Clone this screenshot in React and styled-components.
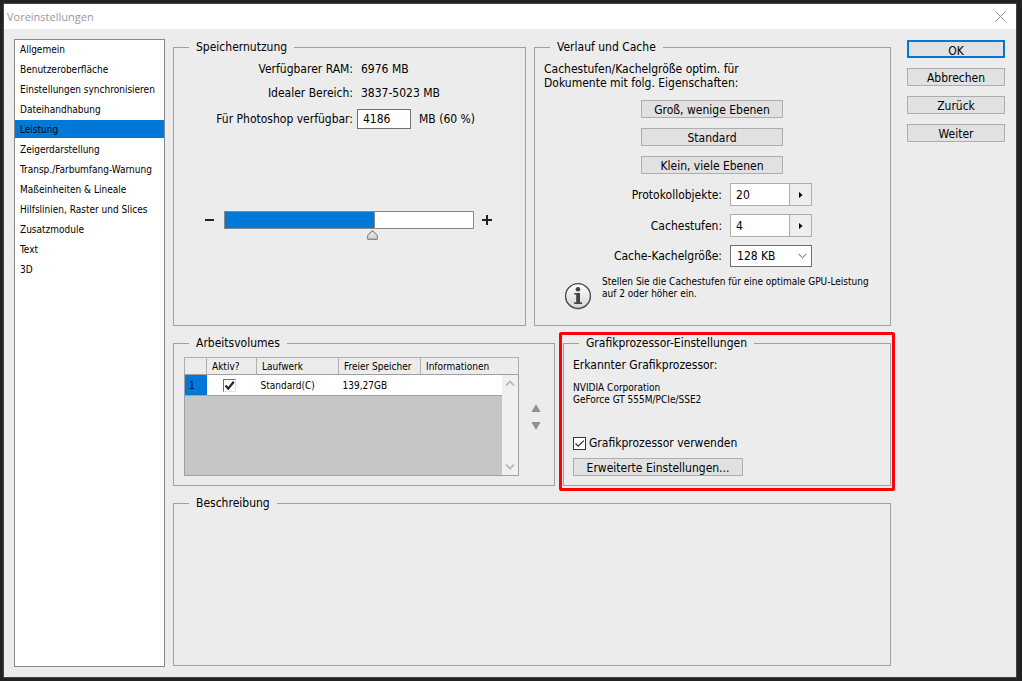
import React from 'react';
import styled, { createGlobalStyle } from 'styled-components';

const categories = [
    'Allgemein',
    'Benutzeroberfläche',
    'Einstellungen synchronisieren',
    'Dateihandhabung',
    'Leistung',
    'Zeigerdarstellung',
    'Transp./Farbumfang-Warnung',
    'Maßeinheiten & Lineale',
    'Hilfslinien, Raster und Slices',
    'Zusatzmodule',
    'Text',
    '3D'
];

const thumb = encodeURIComponent(
    '<svg xmlns="http://www.w3.org/2000/svg" width="11" height="10" viewBox="0 0 11 10"><defs><linearGradient id="g" x2="0" y2="1"><stop stop-color="#fafafa"/><stop offset="1" stop-color="#c8c8c8"/></linearGradient></defs><path d="M5.5 .8 L10.4 5.4 V8.4 Q10.4 9.4 9.4 9.4 H1.6 Q.6 9.4 .6 8.4 V5.4 Z" fill="url(#g)" stroke="#888" stroke-width="1.1"/></svg>'
);

class App extends React.Component {
    constructor(props) {
        super(props);
        this.state = {
            category: 'Leistung',
            ram: '4186',
            percent: 60,
            history: '20',
            levels: '4',
            tile: '128 KB',
            scratch: true,
            gpu: true
        }
        this.handleChange = this.handleChange.bind(this);
    }
    handleChange(e) {
        const { name, type, value, checked } = e.target;
        this.setState({ [name]: type === 'checkbox' ? checked : value });
    }
    handlePercent(percent) {
        const total = 6976;
        this.setState({ percent: percent, ram: String(Math.round(total * percent / 100)) });
    }
    render() {
        const { category, ram, percent, history, levels, tile, scratch, gpu } = this.state;
        return (
            <Desktop>
                <GlobalStyle />
                <Dialog>
                    <TitleBar>
                        <Title>Voreinstellungen</Title>
                        <CloseButton type="button" aria-label="Schließen">
                            <svg width="11" height="11" viewBox="0 0 11 11">
                                <path d="M.5 .5 L10.5 10.5 M10.5 .5 L.5 10.5" stroke="#8f8f8f" fill="none" />
                            </svg>
                        </CloseButton>
                    </TitleBar>
                    <Body>
                        <Categories>
                            {categories.map((name) => (
                                <li key={name}>
                                    <Category
                                        type="button"
                                        $active={name === category}
                                        onClick={() => this.setState({ category: name })}
                                    >
                                        {name}
                                    </Category>
                                </li>
                            ))}
                        </Categories>
                        <Main>
                            <Row>
                                <Group $grow={353}>
                                    <Legend>Speichernutzung</Legend>
                                    <Memory>
                                        <span>Verfügbarer RAM:</span>
                                        <Value>6976 MB</Value>
                                        <span>Idealer Bereich:</span>
                                        <Value>3837-5023 MB</Value>
                                        <label htmlFor="ram">Für Photoshop verfügbar:</label>
                                        <RamField>
                                            <RamInput id="ram" name="ram" value={ram} onChange={this.handleChange} />
                                            <span>MB ({percent} %)</span>
                                        </RamField>
                                    </Memory>
                                    <SliderRow>
                                        <StepButton type="button" aria-label="Weniger" onClick={() => this.handlePercent(percent - 1)}>
                                            <svg width="12" height="12" viewBox="0 0 12 12"><path d="M1 5h9v2H1z" fill="#222" /></svg>
                                        </StepButton>
                                        <Slider
                                            type="range"
                                            min="0"
                                            max="100"
                                            aria-label="Speichernutzung"
                                            value={percent}
                                            style={{ '--filled': percent + '%' }}
                                            onChange={(e) => this.handlePercent(Number(e.target.value))}
                                        />
                                        <StepButton type="button" aria-label="Mehr" onClick={() => this.handlePercent(percent + 1)}>
                                            <svg width="11" height="12" viewBox="0 0 11 12"><path d="M0 5h10v2H0z M4 1h2v10H4z" fill="#222" /></svg>
                                        </StepButton>
                                    </SliderRow>
                                </Group>
                                <Group $grow={357}>
                                    <Legend>Verlauf und Cache</Legend>
                                    <Intro>
                                        Cachestufen/Kachelgröße optim. für<br />
                                        Dokumente mit folg. Eigenschaften:
                                    </Intro>
                                    <Presets>
                                        <Button type="button">Groß, wenige Ebenen</Button>
                                        <Button type="button">Standard</Button>
                                        <Button type="button">Klein, viele Ebenen</Button>
                                    </Presets>
                                    <CacheFields>
                                        <label htmlFor="history">Protokollobjekte:</label>
                                        <Spinner>
                                            <SpinnerInput id="history" name="history" value={history} onChange={this.handleChange} />
                                            <SpinnerButton type="button" aria-label="Protokollobjekte einstellen"><Arrow /></SpinnerButton>
                                        </Spinner>
                                        <label htmlFor="levels">Cachestufen:</label>
                                        <Spinner>
                                            <SpinnerInput id="levels" name="levels" value={levels} onChange={this.handleChange} />
                                            <SpinnerButton type="button" aria-label="Cachestufen einstellen"><Arrow /></SpinnerButton>
                                        </Spinner>
                                        <label htmlFor="tile">Cache-Kachelgröße:</label>
                                        <Select id="tile" name="tile" value={tile} onChange={this.handleChange}>
                                            <option>128 KB</option>
                                            <option>1024 KB</option>
                                        </Select>
                                    </CacheFields>
                                    <Hint>
                                        <InfoIcon />
                                        <Small>
                                            Stellen Sie die Cachestufen für eine optimale GPU-Leistung<br />
                                            auf 2 oder höher ein.
                                        </Small>
                                    </Hint>
                                </Group>
                            </Row>
                            <Row>
                                <Group $grow={380}>
                                    <Legend>Arbeitsvolumes</Legend>
                                    <Volumes>
                                        <Table>
                                            <colgroup>
                                                <col width="22" />
                                                <col width="50" />
                                                <col width="82" />
                                                <col width="82" />
                                                <col />
                                                <col width="16" />
                                            </colgroup>
                                            <thead>
                                                <tr>
                                                    <th aria-label="Nummer"></th>
                                                    <th>Aktiv?</th>
                                                    <th>Laufwerk</th>
                                                    <th>Freier Speicher</th>
                                                    <th colSpan="2">Informationen</th>
                                                </tr>
                                            </thead>
                                            <tbody>
                                                <tr>
                                                    <NumberCell>1</NumberCell>
                                                    <CheckCell>
                                                        <ScratchCheck
                                                            type="checkbox"
                                                            name="scratch"
                                                            aria-label="Standard(C) aktiv"
                                                            checked={scratch}
                                                            onChange={this.handleChange}
                                                        />
                                                    </CheckCell>
                                                    <td>Standard(C)</td>
                                                    <td>139,27GB</td>
                                                    <td></td>
                                                    <ScrollCell rowSpan="2">
                                                        <ScrollBar>
                                                            <Chevron d="M1 5.5 L5 1.5 L9 5.5" />
                                                            <Chevron d="M1 1.5 L5 5.5 L9 1.5" />
                                                        </ScrollBar>
                                                    </ScrollCell>
                                                </tr>
                                                <tr>
                                                    <EmptyCell colSpan="5"></EmptyCell>
                                                </tr>
                                            </tbody>
                                        </Table>
                                        <Order>
                                            <OrderButton type="button" aria-label="Nach oben">
                                                <svg width="10" height="8" viewBox="0 0 10 8"><path d="M5 0 L9.6 8 H.4z" fill="#919191" /></svg>
                                            </OrderButton>
                                            <OrderButton type="button" aria-label="Nach unten">
                                                <svg width="10" height="8" viewBox="0 0 10 8"><path d="M5 8 L9.6 0 H.4z" fill="#919191" /></svg>
                                            </OrderButton>
                                        </Order>
                                    </Volumes>
                                </Group>
                                <Highlight $grow={328}>
                                    <Group $grow={1}>
                                        <Legend>Grafikprozessor-Einstellungen</Legend>
                                        <Gpu>
                                            <span>Erkannter Grafikprozessor:</span>
                                            <GpuName>
                                                NVIDIA Corporation<br />
                                                GeForce GT 555M/PCIe/SSE2
                                            </GpuName>
                                            <CheckLabel>
                                                <Check type="checkbox" name="gpu" checked={gpu} onChange={this.handleChange} />
                                                Grafikprozessor verwenden
                                            </CheckLabel>
                                            <GpuButton type="button">Erweiterte Einstellungen...</GpuButton>
                                        </Gpu>
                                    </Group>
                                </Highlight>
                            </Row>
                            <Row $fill>
                                <Group $grow={1}>
                                    <Legend>Beschreibung</Legend>
                                </Group>
                            </Row>
                        </Main>
                        <Actions>
                            <Button type="button" $primary>OK</Button>
                            <Button type="button">Abbrechen</Button>
                            <Button type="button">Zurück</Button>
                            <Button type="button">Weiter</Button>
                        </Actions>
                    </Body>
                </Dialog>
            </Desktop>
        );
    }
}

export default App;

const Arrow = () => (
    <svg width="4" height="6" viewBox="0 0 4 6"><path d="M0 0 L3.6 3 L0 6z" fill="#000" /></svg>
);

const Chevron = ({ d }) => (
    <svg width="10" height="7" viewBox="0 0 10 7"><path d={d} fill="none" stroke="#b4b4b4" strokeWidth="1.6" /></svg>
);

const InfoIcon = () => (
    <svg width="28" height="28" viewBox="0 0 28 28">
        <defs>
            <linearGradient id="info" x2="0" y2="1">
                <stop stopColor="#ffffff" />
                <stop offset="1" stopColor="#d4d4d4" />
            </linearGradient>
        </defs>
        <circle cx="14" cy="14.8" r="12.6" fill="none" stroke="#bbb" />
        <circle cx="14" cy="14" r="12.4" fill="url(#info)" stroke="#444" strokeWidth="1.3" />
        <circle cx="14" cy="7.2" r="2.3" fill="#444" />
        <path d="M10.2 11 H16 V20.2 H18 V22 H10.2 V20.2 H12.2 V12.6 H10.2z" fill="#444" />
    </svg>
);

const GlobalStyle = createGlobalStyle`
    * {
        box-sizing: border-box;
    }

    body {
        margin: 0;
        background: #222;
        color: #000;
        font: 12px/18px "DejaVu Sans Condensed", "Noto Sans", sans-serif;
    }

    button, input, select {
        font: inherit;
        color: inherit;
    }
`;

const Desktop = styled.div`
    display: flex;
    min-height: 100vh;
    padding: 3px 5px 3px 3px;
`;

const Dialog = styled.div`
    flex: 1;
    display: flex;
    flex-direction: column;
    border: 1px solid #444;
    background: #ececec;
`;

const TitleBar = styled.header`
    display: flex;
    align-items: center;
    justify-content: space-between;
    height: 25px;
    padding: 0 10px 0 3px;
    background: #fff;
`;

const Title = styled.h1`
    margin: 0;
    font: 11px/24px "Open Sans", sans-serif;
    color: #999;
`;

const CloseButton = styled.button`
    display: flex;
    padding: 0;
    border: none;
    background: none;
`;

const Body = styled.div`
    flex: 1;
    display: flex;
    padding: 9px 11px 10px 10px;
`;

const Categories = styled.ul`
    flex: 0 0 151px;
    display: flex;
    flex-direction: column;
    gap: 2px;
    margin: 1px 8px 0 0;
    padding: 0;
    border: 1px solid #888;
    background: #fff;
    list-style: none;
`;

const Category = styled.button`
    display: block;
    width: 100%;
    height: 18px;
    padding: 2px 0 0 5px;
    border: none;
    background: ${(props) => (props.$active ? '#0078d7' : 'none')};
    font-size: 10px;
    line-height: 16px;
    text-align: left;
    white-space: nowrap;
`;

const Main = styled.main`
    flex: 1;
    display: flex;
    flex-direction: column;
    gap: 8px;
    min-width: 0;
    padding-bottom: 1px;
`;

const Row = styled.div`
    display: flex;
    flex: ${(props) => (props.$fill ? '1' : 'none')};
    gap: 8px;
`;

const Group = styled.fieldset`
    flex: ${(props) => props.$grow} 1 0;
    min-width: 0;
    margin: 0;
    padding: 0;
    border: 1px solid #a0a0a0;
`;

const Legend = styled.legend`
    margin-left: 15px;
    padding: 0 7px;
    line-height: 18px;
`;

const Highlight = styled.div`
    position: relative;
    flex: ${(props) => props.$grow} 1 0;
    display: flex;
    min-width: 0;

    &::after {
        content: '';
        position: absolute;
        inset: -2px -4px -5px;
        border: 3px solid #fb0007;
        border-radius: 2px;
        pointer-events: none;
    }
`;

const Memory = styled.div`
    display: grid;
    grid-template-columns: 179px 1fr;
    align-items: center;
    gap: 6px 4px;
    padding-top: 4px;

    > :nth-child(odd) {
        text-align: right;
    }
`;

const Value = styled.span`
    padding-left: 4px;
`;

const RamField = styled.div`
    display: flex;
    align-items: center;
    gap: 8px;
    height: 22px;
`;

const RamInput = styled.input`
    width: 54px;
    height: 20px;
    padding: 0 5px;
    border: 1px solid #707070;
    background: #fff;
`;

const SliderRow = styled.div`
    display: flex;
    align-items: center;
    gap: 8px;
    padding: 81px 32px 0 30px;
`;

const StepButton = styled.button`
    display: flex;
    padding: 0;
    border: none;
    background: none;
`;

const Slider = styled.input`
    appearance: none;
    flex: 1;
    min-width: 0;
    height: 18px;
    margin: 0;
    border: 1px solid #888;
    background: linear-gradient(to right, #0078d7 var(--filled), #888 var(--filled), #888 calc(var(--filled) + 1px), #fff calc(var(--filled) + 1px));

    &::-webkit-slider-runnable-track {
        height: 16px;
    }

    &::-webkit-slider-thumb {
        appearance: none;
        width: 11px;
        height: 10px;
        margin-top: 18px;
        background: url("data:image/svg+xml,${thumb}") no-repeat;
    }
`;

const Intro = styled.p`
    margin: 6px 0 10px 9px;
    line-height: 14px;
`;

const Button = styled.button`
    width: 100%;
    height: 18px;
    padding: 2px 0 0;
    border: ${(props) => (props.$primary ? '2px solid #0078d7' : '1px solid #adadad')};
    background: #e1e1e1;
    line-height: 14px;
    white-space: nowrap;
`;

const Presets = styled.div`
    display: flex;
    flex-direction: column;
    gap: 10px;
    width: 142px;
    margin-left: 106px;
`;

const CacheFields = styled.div`
    display: grid;
    grid-template-columns: 187px 82px;
    align-items: center;
    gap: 8px;
    margin-top: 9px;
    text-align: right;
`;

const Spinner = styled.div`
    display: flex;
    height: 23px;
    border: 1px solid #adadad;
`;

const SpinnerInput = styled.input`
    flex: 1;
    min-width: 0;
    padding: 0 5px;
    border: none;
    background: #fff;
`;

const SpinnerButton = styled.button`
    display: flex;
    align-items: center;
    justify-content: center;
    width: 22px;
    padding: 0;
    border: none;
    border-left: 1px solid #adadad;
    background: #eee;
`;

const Select = styled.select`
    appearance: none;
    width: 82px;
    height: 22px;
    padding: 0 6px;
    border: 1px solid #707070;
    border-radius: 0;
    background: #fff url("data:image/svg+xml,%3Csvg xmlns='http://www.w3.org/2000/svg' width='9' height='6'%3E%3Cpath d='M.5 .8 L4.5 4.8 L8.5 .8' fill='none' stroke='%23555'/%3E%3C/svg%3E") no-repeat right 4px center;
`;

const Small = styled.p`
    margin: 0;
    font-size: 10px;
    line-height: 12px;
    white-space: nowrap;
`;

const Hint = styled.div`
    display: flex;
    gap: 10px;
    padding: 9px 0 15px 29px;

    svg {
        margin-top: 6px;
    }
`;

const Volumes = styled.div`
    display: flex;
    align-items: center;
    padding: 5px 13px 9px 10px;
`;

const Table = styled.table`
    flex: 1;
    table-layout: fixed;
    width: 100%;
    border-collapse: collapse;
    border: 1px solid #a0a0a0;
    font-size: 10px;
    line-height: 15px;

    th {
        height: 17px;
        padding: 0 0 0 5px;
        border: 1px solid #b0b0b0;
        border-bottom-color: #a0a0a0;
        background: #ececec;
        font-weight: normal;
        text-align: left;
        white-space: nowrap;
    }

    td {
        height: 21px;
        padding: 0 0 0 4px;
        border-bottom: 1px solid #a0a0a0;
        background: #fff;
    }
`;

const NumberCell = styled.td`
    && {
        background: #0078d7;
    }
`;

const CheckCell = styled.td`
    line-height: 0;
`;

const Check = styled.input`
    appearance: none;
    flex: none;
    width: 13px;
    height: 13px;
    margin: 0;
    border: 1px solid #333;
    background: #fff;

    &:checked {
        background: #fff url("data:image/svg+xml,%3Csvg xmlns='http://www.w3.org/2000/svg' width='11' height='11'%3E%3Cpath d='M1.5 5.5 L4.2 8.2 L9.8 2.6' fill='none' stroke='%23333' stroke-width='1.3'/%3E%3C/svg%3E");
    }
`;

const ScratchCheck = styled(Check)`
    margin-left: 12px;
    border-color: #707070 #e3e3e3 #e3e3e3 #707070;

    &:checked {
        background: #fff url("data:image/svg+xml,%3Csvg xmlns='http://www.w3.org/2000/svg' width='11' height='11'%3E%3Cpath d='M1.5 5.5 L4.2 8.6 L9.8 1.8' fill='none' stroke='%23222' stroke-width='2.2'/%3E%3C/svg%3E");
    }
`;

const EmptyCell = styled.td`
    && {
        height: 80px;
        background: #c6c6c6;
    }
`;

const ScrollCell = styled.td`
    && {
        padding: 0;
        background: #f0f0f0;
    }
`;

const ScrollBar = styled.div`
    display: flex;
    flex-direction: column;
    align-items: center;
    justify-content: space-between;
    height: 100px;
    padding: 5px 0;
`;

const Order = styled.div`
    display: flex;
    flex-direction: column;
    gap: 10px;
    margin-left: 12px;
`;

const OrderButton = styled.button`
    display: flex;
    padding: 0;
    border: none;
    background: none;
`;

const Gpu = styled.div`
    display: flex;
    flex-direction: column;
    align-items: flex-start;
    padding: 4px 0 0 9px;
`;

const GpuName = styled(Small)`
    margin: 8px 0 28px;
`;

const CheckLabel = styled.label`
    display: flex;
    align-items: center;
    gap: 3px;
`;

const GpuButton = styled(Button)`
    width: 170px;
    margin: 6px 0 9px;
`;

const Actions = styled.div`
    display: flex;
    flex-direction: column;
    gap: 10px;
    width: 98px;
    margin: 2px 0 0 16px;
`;
